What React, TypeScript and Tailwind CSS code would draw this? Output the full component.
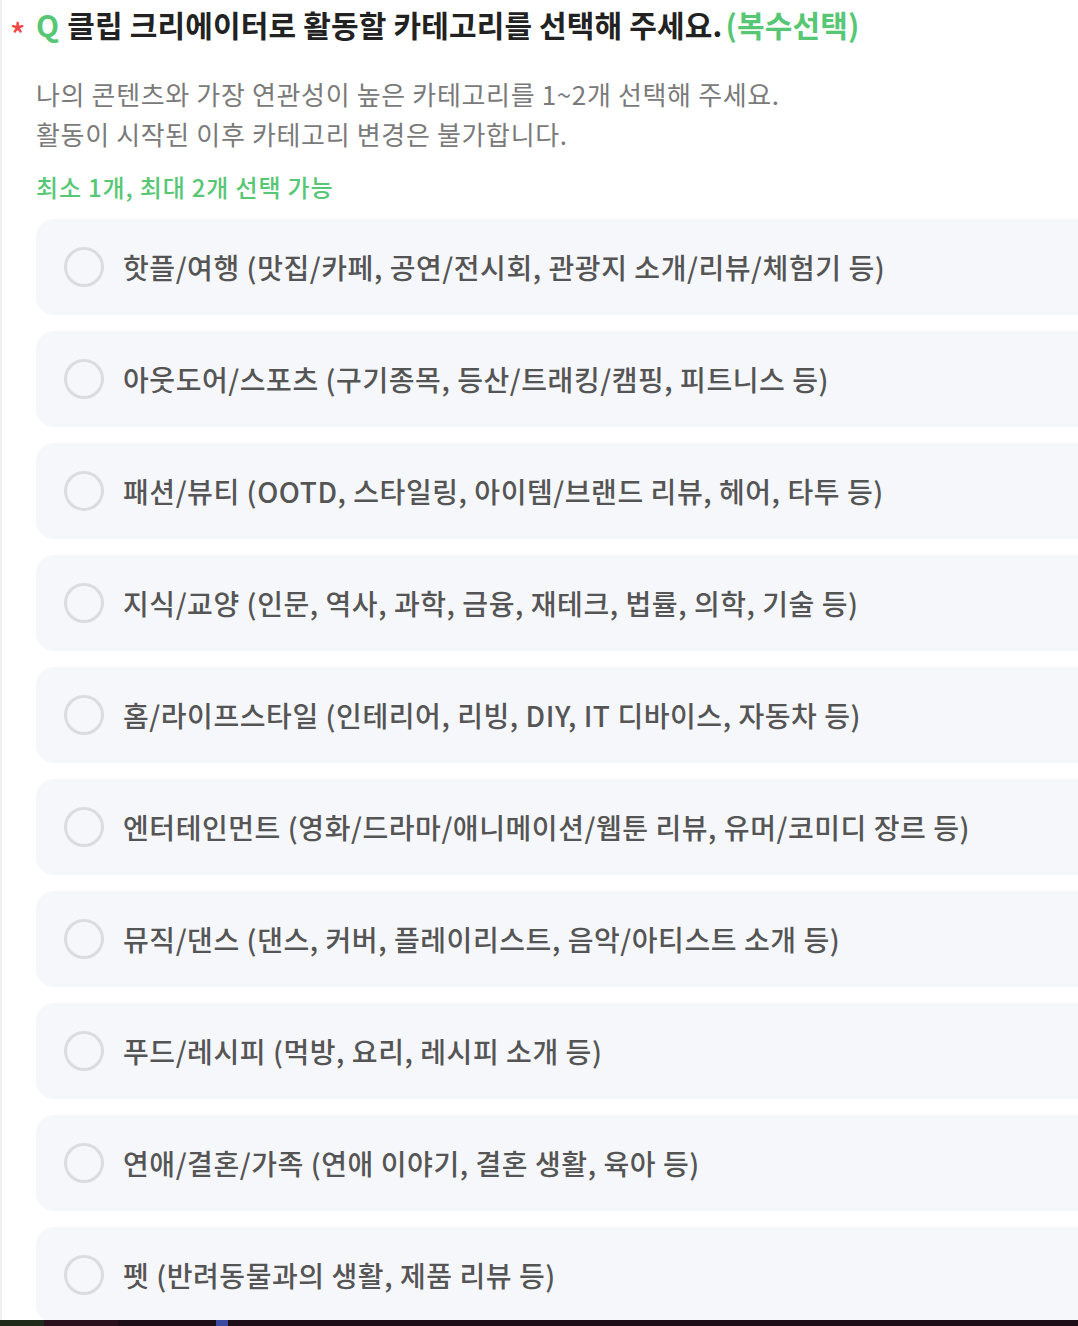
const options = [
  '핫플/여행 (맛집/카페, 공연/전시회, 관광지 소개/리뷰/체험기 등)',
  '아웃도어/스포츠 (구기종목, 등산/트래킹/캠핑, 피트니스 등)',
  '패션/뷰티 (OOTD, 스타일링, 아이템/브랜드 리뷰, 헤어, 타투 등)',
  '지식/교양 (인문, 역사, 과학, 금융, 재테크, 법률, 의학, 기술 등)',
  '홈/라이프스타일 (인테리어, 리빙, DIY, IT 디바이스, 자동차 등)',
  '엔터테인먼트 (영화/드라마/애니메이션/웹툰 리뷰, 유머/코미디 장르 등)',
  '뮤직/댄스 (댄스, 커버, 플레이리스트, 음악/아티스트 소개 등)',
  '푸드/레시피 (먹방, 요리, 레시피 소개 등)',
  '연애/결혼/가족 (연애 이야기, 결혼 생활, 육아 등)',
  '펫 (반려동물과의 생활, 제품 리뷰 등)',
];

export default function App() {
  return (
    <div
      className="w-[1078px] h-[1326px] overflow-hidden bg-white flex flex-col"
      style={{ fontFamily: '"Noto Sans CJK KR", "Noto Sans", sans-serif' }}
    >
      <div className="flex-1 flex border-l-2 border-[#efefef] min-h-0">
        <div className="flex-1 pl-[34px] min-w-0">
          {/* Question title */}
          <div className="relative h-[48px] flex items-center text-[30px] font-bold tracking-[0.005em] text-[#222] whitespace-nowrap">
            <span className="absolute left-[-26px] top-[17px] text-[32px] leading-none text-[#f04848] font-medium">*</span>
            <span className="text-[#57c776] mr-[8px]">Q</span>
            <span>클립 크리에이터로 활동할 카테고리를 선택해 주세요.</span>
            <span className="text-[#57c776] ml-[3px]">(복수선택)</span>
          </div>

          <div className="mt-[26px] text-[26px] leading-[40px] text-[#7a7a7a] tracking-[0.025em] whitespace-nowrap">
            <p>나의 콘텐츠와 가장 연관성이 높은 카테고리를 1~2개 선택해 주세요.</p>
            <p>활동이 시작된 이후 카테고리 변경은 불가합니다.</p>
          </div>

          <p className="mt-[13px] text-[24px] leading-[40px] text-[#57c776] font-medium tracking-[0.035em]">
            최소 1개, 최대 2개 선택 가능
          </p>

          <div className="mt-[12px] flex flex-col gap-[16px] mr-[-60px]">
            {options.map((opt) => (
              <label
                key={opt}
                className="h-[96px] shrink-0 rounded-[18px] bg-[#f6f7fb] flex items-center pl-[28px] gap-[19px] cursor-pointer"
              >
                <span className="w-[40px] h-[40px] rounded-full border-[3px] border-[#dcdcdf] shrink-0" />
                <span className="text-[28px] font-medium text-[#555] tracking-[0.02em] whitespace-nowrap">
                  {opt}
                </span>
              </label>
            ))}
          </div>
        </div>
      </div>
      <div className="h-[6px] shrink-0 flex bg-[#1c0d16]">
        <div className="w-[44px] bg-[#1f2a1a]" />
        <div className="w-[74px] bg-[#2a0f1c]" />
        <div className="w-[8px]" />
        <div className="w-[12px] bg-[#3a4aa0] ml-[90px]" />
      </div>
    </div>
  );
}
